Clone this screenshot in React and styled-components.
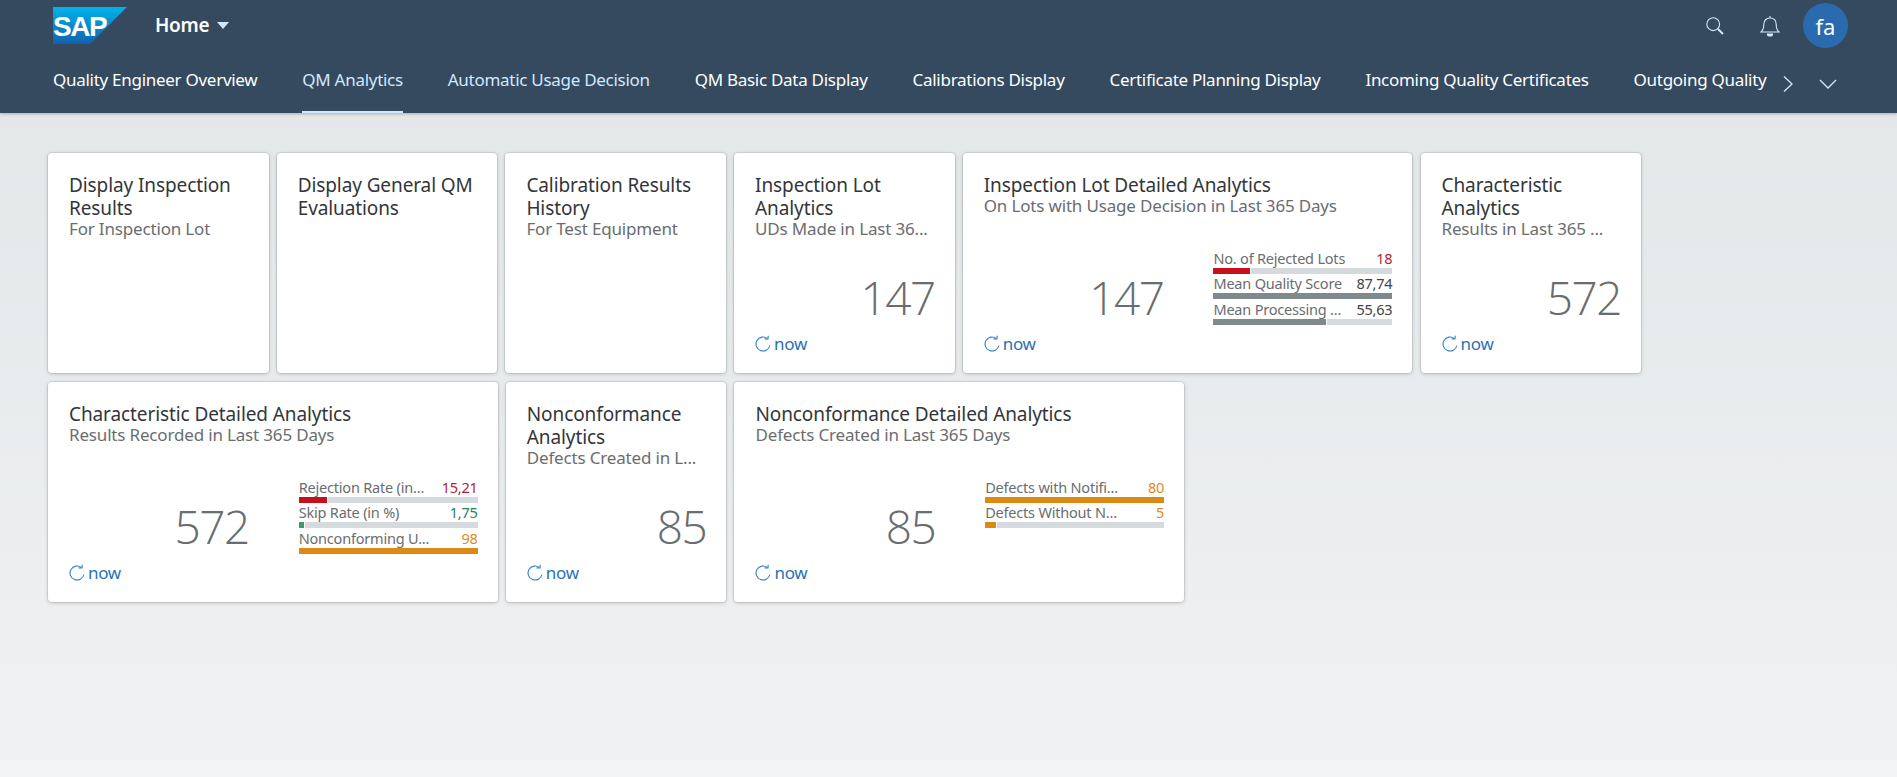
import React from "react";
import styled, { createGlobalStyle } from "styled-components";

const Global = createGlobalStyle`
  html, body { margin: 0; padding: 0; height: 100%; }
  body { font-family: "Noto Sans", "Open Sans", Arial, sans-serif; background: #f3f4f6; }
  #root { min-height: 100%; }
`;

const Page = styled.div`
  width: 1897px;
  height: 777px;
  overflow: hidden;
  display: flex;
  flex-direction: column;
  background: linear-gradient(to bottom, #e1e6e7 0%, #f0f1f3 97.8%, #f3f4f6 97.8%);
`;
const Header = styled.header`
  height: 113px;
  flex: none;
  background: #354a5f;
  box-shadow: 0 1px 3px rgba(0, 0, 0, 0.25);
  display: flex;
  flex-direction: column;
`;
const TopBar = styled.div`
  height: 51px;
  padding: 0 49px 0 53px;
  display: flex;
  align-items: center;
`;
const Logo = styled.svg`
  width: 74px;
  height: 37px;
  flex: none;
`;
const HomeMenu = styled.div`
  margin: -2px 0 0 28px;
  display: flex;
  align-items: center;
  gap: 8px;
  color: #fff;
  font-size: 19px;
  font-weight: 600;
  letter-spacing: -0.3px;
`;
const Caret = styled.span`
  width: 0;
  height: 0;
  border-left: 6px solid transparent;
  border-right: 6px solid transparent;
  border-top: 7px solid #d1e8ff;
  margin-top: 1px;
`;
const Actions = styled.div`
  margin-left: auto;
  display: flex;
  align-items: center;
`;
const IconButton = styled.span`
  width: 24px;
  height: 24px;
  margin-right: ${(p) => p.$gap}px;
  display: flex;
  align-items: center;
  justify-content: center;
`;
const Avatar = styled.div`
  width: 45px;
  height: 45px;
  border-radius: 50%;
  background: #2a6bb0;
  color: #fff;
  font-size: 22px;
  display: flex;
  align-items: center;
  justify-content: center;
`;
const TabBar = styled.nav`
  height: 62px;
  display: flex;
  padding-left: 53px;
`;
const TabList = styled.div`
  display: flex;
  gap: 44.9px;
  flex: none;
`;
const Tab = styled.a`
  flex: none;
  box-sizing: border-box;
  height: 62px;
  padding-bottom: 4px;
  display: flex;
  align-items: center;
  color: ${(p) => (p.$selected || p.$hint ? "#d1e8ff" : "#fff")};
  font-size: 17px;
  letter-spacing: -0.28px;
  white-space: nowrap;
  border-bottom: 2px solid ${(p) => (p.$selected ? "#d1e8ff" : "transparent")};
`;
const TabIcons = styled.div`
  position: absolute;
  left: 1782px;
  top: 75px;
  display: flex;
  align-items: center;
  gap: 25px;
`;
const Content = styled.main`
  padding: 40px 0 0 48px;
  display: flex;
  flex-wrap: wrap;
  gap: 9px 8.1px;
  align-content: flex-start;
`;
const Card = styled.section`
  box-sizing: border-box;
  width: ${(p) => (p.$wide ? 449.7 : 220.6)}px;
  height: 220px;
  padding: 21px 20px 19px 21px;
  background: #fff;
  border-radius: 4px;
  box-shadow: 0 0 0 1px rgba(0, 0, 0, 0.08), 0 1px 4px rgba(0, 0, 0, 0.18);
  display: flex;
  flex-direction: column;
`;
const Title = styled.h3`
  margin: 0;
  font-weight: 400;
  font-size: 19px;
  line-height: 23px;
  letter-spacing: -0.1px;
  color: #32363a;
`;
const Subtitle = styled.div`
  font-size: 17px;
  line-height: 17px;
  letter-spacing: -0.17px;
  color: #6a6d70;
  white-space: nowrap;
`;
const Body = styled.div`
  margin-top: auto;
  height: 77px;
  display: flex;
  justify-content: flex-end;
`;
const Value = styled.div`
  align-self: flex-end;
  flex: 1;
  text-align: right;
  font-size: 46px;
  font-weight: 300;
  line-height: 56px;
  letter-spacing: -1.5px;
  color: #6a6d70;
  font-family: "Open Sans", "Noto Sans", sans-serif;
`;
const Chart = styled.div`
  width: 179px;
  margin-left: 50px;
  flex: none;
`;
const ChartRow = styled.div`
  height: 25.5px;
  display: flex;
  flex-direction: column;
`;
const ChartText = styled.div`
  padding-top: 1.5px;
  height: 18px;
  display: flex;
  justify-content: space-between;
  font-size: 14.5px;
  line-height: 17px;
  letter-spacing: -0.2px;
  white-space: nowrap;
`;
const ChartLabel = styled.span`
  color: #6a6d70;
`;
const colors = {
  red: { text: "#b3223a", bar: "#c8101a" },
  green: { text: "#2b7d5b", bar: "#3a9a6e" },
  orange: { text: "#df8a1e", bar: "#dc8a14" },
  neutral: { text: "#3f4346", bar: "#7f8a8c" },
};
const ChartValue = styled.span`
  color: ${(p) => colors[p.$tone].text};
`;
const Track = styled.div`
  height: 6px;
  background: #d5dadc;
  display: flex;
`;
const Fill = styled.div`
  height: 100%;
  background: ${(p) => colors[p.$tone].bar};
  border-right: ${(p) => (p.$pct < 100 ? "1px solid #fff" : "none")};
`;
const Footer = styled.div`
  margin-top: 7px;
  height: 22px;
  display: flex;
  align-items: center;
  gap: 3px;
  color: #2a72b5;
  font-size: 17px;
  letter-spacing: -0.3px;
`;
const FooterIcon = styled.svg`
  width: 16px;
  height: 17px;
  flex: none;
`;

function RefreshIcon() {
  return (
    <FooterIcon viewBox="0 0 16 17" fill="none" stroke="#2f7fc8" strokeWidth="1.1">
      <path d="M12.5 3.6 A7 7 0 1 0 14.9 10.5" />
      <path d="M9.6 3.9 L13 4 L13.2 0.8" />
    </FooterIcon>
  );
}

const tabs = [
  { label: "Quality Engineer Overview" },
  { label: "QM Analytics", selected: true },
  { label: "Automatic Usage Decision", hint: true },
  { label: "QM Basic Data Display" },
  { label: "Calibrations Display" },
  { label: "Certificate Planning Display" },
  { label: "Incoming Quality Certificates" },
  { label: "Outgoing Quality" },
];

const cards = [
  { title: "Display Inspection Results", sub: "For Inspection Lot" },
  { title: "Display General QM Evaluations" },
  { title: "Calibration Results History", sub: "For Test Equipment" },
  { title: "Inspection Lot Analytics", sub: "UDs Made in Last 36...", value: "147" },
  {
    title: "Inspection Lot Detailed Analytics",
    sub: "On Lots with Usage Decision in Last 365 Days",
    value: "147",
    rows: [
      { label: "No. of Rejected Lots", value: "18", pct: 20.6, tone: "red" },
      { label: "Mean Quality Score", value: "87,74", pct: 100, tone: "neutral" },
      { label: "Mean Processing ...", value: "55,63", pct: 63, tone: "neutral" },
    ],
  },
  { title: "Characteristic Analytics", sub: "Results in Last 365 ...", value: "572" },
  {
    title: "Characteristic Detailed Analytics",
    sub: "Results Recorded in Last 365 Days",
    value: "572",
    rows: [
      { label: "Rejection Rate (in...", value: "15,21", pct: 15.6, tone: "red" },
      { label: "Skip Rate (in %)", value: "1,75", pct: 2.8, tone: "green" },
      { label: "Nonconforming U...", value: "98", pct: 100, tone: "orange" },
    ],
  },
  { title: "Nonconformance Analytics", sub: "Defects Created in L...", value: "85" },
  {
    title: "Nonconformance Detailed Analytics",
    sub: "Defects Created in Last 365 Days",
    value: "85",
    rows: [
      { label: "Defects with Notifi...", value: "80", pct: 100, tone: "orange" },
      { label: "Defects Without N...", value: "5", pct: 6.2, tone: "orange" },
    ],
  },
];

function Tile({ card }) {
  return (
    <Card $wide={!!card.rows}>
      <Title>{card.title}</Title>
      {card.sub && <Subtitle>{card.sub}</Subtitle>}
      {card.value && (
        <>
          <Body>
            <Value>{card.value}</Value>
            {card.rows && (
              <Chart>
                {card.rows.map((r) => (
                  <ChartRow key={r.label}>
                    <ChartText>
                      <ChartLabel>{r.label}</ChartLabel>
                      <ChartValue $tone={r.tone}>{r.value}</ChartValue>
                    </ChartText>
                    <Track>
                      <Fill $tone={r.tone} $pct={r.pct} style={{ width: `${r.pct}%` }} />
                    </Track>
                  </ChartRow>
                ))}
              </Chart>
            )}
          </Body>
          <Footer>
            <RefreshIcon />
            now
          </Footer>
        </>
      )}
    </Card>
  );
}

export default function App() {
  return (
    <>
      <Global />
      <Page>
        <Header>
          <TopBar>
            <Logo viewBox="0 0 74 37">
              <defs>
                <linearGradient id="sapBlue" x1="0" y1="0" x2="0" y2="1">
                  <stop offset="0" stopColor="#00b3ea" />
                  <stop offset="1" stopColor="#1262ad" />
                </linearGradient>
              </defs>
              <polygon points="0,0 74,0 37,37 0,37" fill="url(#sapBlue)" />
              <text
                x="0"
                y="29"
                fill="#fff"
                fontFamily="'Liberation Sans', Arial, sans-serif"
                fontWeight="700"
                fontSize="28"
                letterSpacing="-1.4"
              >
                SAP
              </text>
            </Logo>
            <HomeMenu>
              Home
              <Caret />
            </HomeMenu>
            <Actions>
              <IconButton $gap={31}>
                <svg width="20" height="20" viewBox="0 0 20 20" fill="none" stroke="#d1e8ff">
                  <circle cx="8.2" cy="8.2" r="6.4" strokeWidth="1.1" />
                  <path d="M13 13 L18 18" strokeWidth="2" />
                </svg>
              </IconButton>
              <IconButton $gap={21}>
                <svg width="20" height="22" viewBox="0 0 20 22" fill="none" stroke="#d1e8ff" strokeWidth="1.1">
                  <path d="M1 17 C3.5 15 3.8 13 3.8 9.5 C3.8 5.5 6.3 3 10 3 C13.7 3 16.2 5.5 16.2 9.5 C16.2 13 16.5 15 19 17 Z" />
                  <path d="M10 1 V3" />
                  <path d="M7.5 19 H12.5 V19.5 C12.5 20.5 11.5 21 10 21 C8.5 21 7.5 20.5 7.5 19.5 Z" fill="#d1e8ff" />
                </svg>
              </IconButton>
              <Avatar>fa</Avatar>
            </Actions>
          </TopBar>
          <TabBar>
            <TabList>
              {tabs.map((t) => (
                <Tab key={t.label} $selected={t.selected} $hint={t.hint}>
                  {t.label}
                </Tab>
              ))}
            </TabList>
            <TabIcons>
              <svg width="12" height="18" viewBox="0 0 12 18" fill="none" stroke="#d1e8ff" strokeWidth="1.3">
                <path d="M2 1.5 L10 9 L2 16.5" />
              </svg>
              <svg width="18" height="10" viewBox="0 0 18 10" fill="none" stroke="#d1e8ff" strokeWidth="1.3">
                <path d="M1 1 L9 9 L17 1" />
              </svg>
            </TabIcons>
          </TabBar>
        </Header>
        <Content>
          {cards.map((c) => (
            <Tile key={c.title} card={c} />
          ))}
        </Content>
      </Page>
    </>
  );
}
